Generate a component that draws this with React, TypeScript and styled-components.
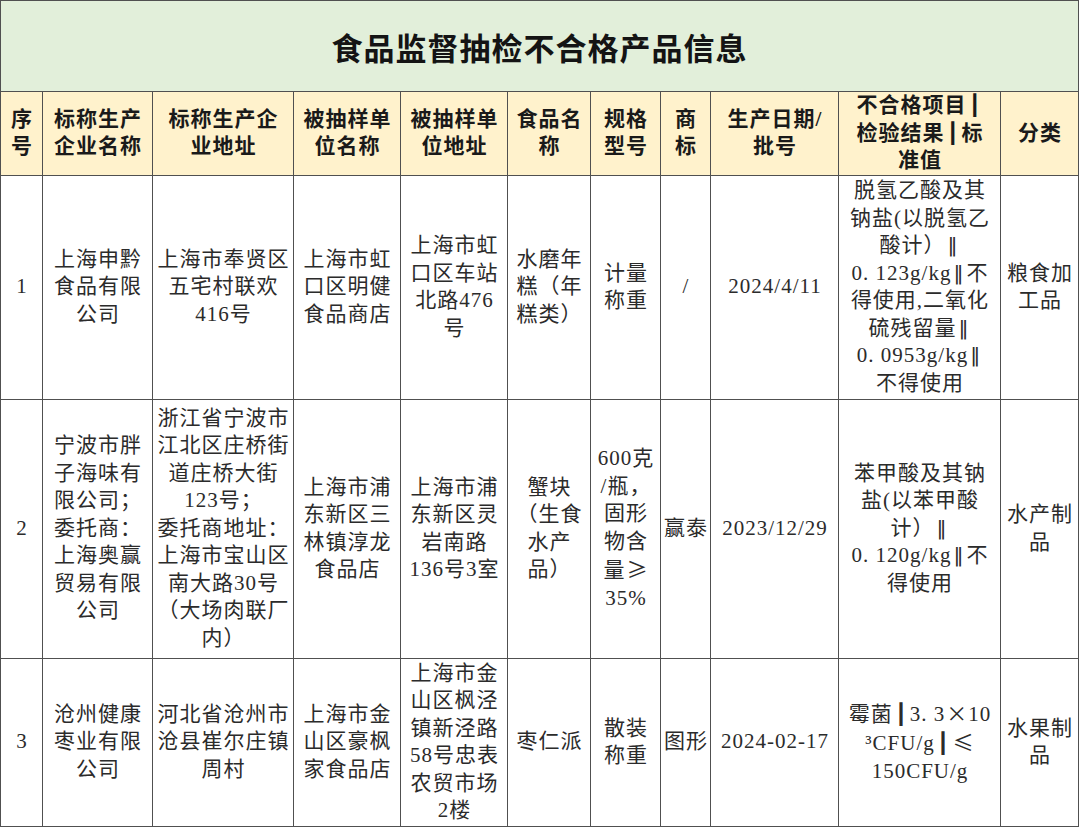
import React from "react";
import styled, { createGlobalStyle } from "styled-components";

const Global = createGlobalStyle`
  html, body { margin: 0; padding: 0; background: #ffffff; }
  body { font-family: "Liberation Serif", "Noto Sans CJK SC", serif; }
`;

const Sheet = styled.table`
  border-collapse: collapse;
  table-layout: fixed;
  width: 1079px;
  font-family: "Liberation Serif", "Noto Sans CJK SC", serif;
`;

const TitleCell = styled.td`
  height: 90px;
  background: #e2efda;
  border: 1px solid #505050;
  text-align: center;
  vertical-align: middle;
  font-family: "Noto Sans CJK SC", sans-serif;
  font-size: 31px;
  font-weight: 700;
  color: #141414;
  letter-spacing: 1px;
  padding: 0;
`;

const HeadCell = styled.th`
  height: 81px;
  background: #fff2cc;
  border: 1px solid #505050;
  text-align: center;
  vertical-align: middle;
  font-size: 21px;
  font-weight: 700;
  line-height: 27.5px;
  letter-spacing: 1px;
  color: #1a1a1a;
  padding: 0 0 0 1px;
  white-space: nowrap;
  overflow: hidden;
`;

const BodyCell = styled.td<{ $h: number }>`
  height: ${(p) => p.$h}px;
  background: #ffffff;
  border: 1px solid #505050;
  text-align: center;
  vertical-align: middle;
  font-size: 21px;
  font-weight: 400;
  line-height: 27.5px;
  letter-spacing: 1px;
  color: #2b2b2b;
  padding: 0 0 0 1px;
  white-space: nowrap;
  overflow: hidden;
`;

const Bar = styled.span<{ $heavy?: boolean }>`
  display: inline-block;
  font-family: "DejaVu Sans", sans-serif;
  font-weight: ${(p) => (p.$heavy ? 700 : 400)};
  font-size: 20px;
  margin: 0 3px 0 2px;
  letter-spacing: 0;
`;

const Sym = styled.span`
  font-family: "Noto Sans CJK SC", sans-serif;
  letter-spacing: 0;
  margin: 0 1px;
`;

const widths = [42, 110, 141, 107, 107, 83, 70, 50, 128, 162, 78];

const renderLine = (line: string) => {
  const parts: React.ReactNode[] = [];
  let buf = "";
  let k = 0;
  const flush = () => {
    if (buf) parts.push(buf);
    buf = "";
  };
  for (const ch of line) {
    if (ch === "‖" || ch === "┃") {
      flush();
      parts.push(
        <Bar key={k++} $heavy={ch === "┃"}>
          {ch}
        </Bar>
      );
    } else if (ch === "≥" || ch === "≤" || ch === "×") {
      flush();
      parts.push(<Sym key={k++}>{ch}</Sym>);
    } else {
      buf += ch;
    }
  }
  flush();
  return parts;
};

const headers: string[][] = [
  ["序", "号"],
  ["标称生产", "企业名称"],
  ["标称生产企", "业地址"],
  ["被抽样单", "位名称"],
  ["被抽样单", "位地址"],
  ["食品名", "称"],
  ["规格", "型号"],
  ["商", "标"],
  ["生产日期/", "批号"],
  ["不合格项目┃", "检验结果┃标", "准值"],
  ["分类"],
];

type Row = { h: number; cells: string[][] };

const rows: Row[] = [
  {
    h: 223,
    cells: [
      ["1"],
      ["上海申黔", "食品有限", "公司"],
      ["上海市奉贤区", "五宅村联欢", "416号"],
      ["上海市虹", "口区明健", "食品商店"],
      ["上海市虹", "口区车站", "北路476", "号"],
      ["水磨年", "糕（年", "糕类）"],
      ["计量", "称重"],
      ["/"],
      ["2024/4/11"],
      [
        "脱氢乙酸及其",
        "钠盐(以脱氢乙",
        "酸计）‖",
        "0. 123g/kg‖不",
        "得使用,二氧化",
        "硫残留量‖",
        "0. 0953g/kg‖",
        "不得使用",
      ],
      ["粮食加", "工品"],
    ],
  },
  {
    h: 258,
    cells: [
      ["2"],
      ["宁波市胖", "子海味有", "限公司；", "委托商：", "上海奥赢", "贸易有限", "公司"],
      [
        "浙江省宁波市",
        "江北区庄桥街",
        "道庄桥大街",
        "123号；",
        "委托商地址：",
        "上海市宝山区",
        "南大路30号",
        "（大场肉联厂",
        "内）",
      ],
      ["上海市浦", "东新区三", "林镇淳龙", "食品店"],
      ["上海市浦", "东新区灵", "岩南路", "136号3室"],
      ["蟹块", "（生食", "水产", "品）"],
      ["600克", "/瓶，", "固形", "物含", "量≥", "35%"],
      ["赢泰"],
      ["2023/12/29"],
      ["苯甲酸及其钠", "盐(以苯甲酸", "计）‖", "0. 120g/kg‖不", "得使用"],
      ["水产制", "品"],
    ],
  },
  {
    h: 167,
    cells: [
      ["3"],
      ["沧州健康", "枣业有限", "公司"],
      ["河北省沧州市", "沧县崔尔庄镇", "周村"],
      ["上海市金", "山区豪枫", "家食品店"],
      ["上海市金", "山区枫泾", "镇新泾路", "58号忠表", "农贸市场", "2楼"],
      ["枣仁派"],
      ["散装", "称重"],
      ["图形"],
      ["2024-02-17"],
      ["霉菌┃3. 3×10", "³CFU/g┃≤", "150CFU/g"],
      ["水果制", "品"],
    ],
  },
];

const Lines = ({ lines }: { lines: string[] }) => (
  <>
    {lines.map((l, i) => (
      <React.Fragment key={i}>
        {i > 0 && <br />}
        {renderLine(l)}
      </React.Fragment>
    ))}
  </>
);

export default function App() {
  return (
    <>
      <Global />
      <Sheet>
        <colgroup>
          {widths.map((w, i) => (
            <col key={i} style={{ width: w }} />
          ))}
        </colgroup>
        <tbody>
          <tr>
            <TitleCell colSpan={11}>食品监督抽检不合格产品信息</TitleCell>
          </tr>
          <tr>
            {headers.map((h, i) => (
              <HeadCell key={i}>
                <Lines lines={h} />
              </HeadCell>
            ))}
          </tr>
          {rows.map((r, ri) => (
            <tr key={ri}>
              {r.cells.map((c, ci) => (
                <BodyCell key={ci} $h={r.h}>
                  <Lines lines={c} />
                </BodyCell>
              ))}
            </tr>
          ))}
        </tbody>
      </Sheet>
    </>
  );
}
